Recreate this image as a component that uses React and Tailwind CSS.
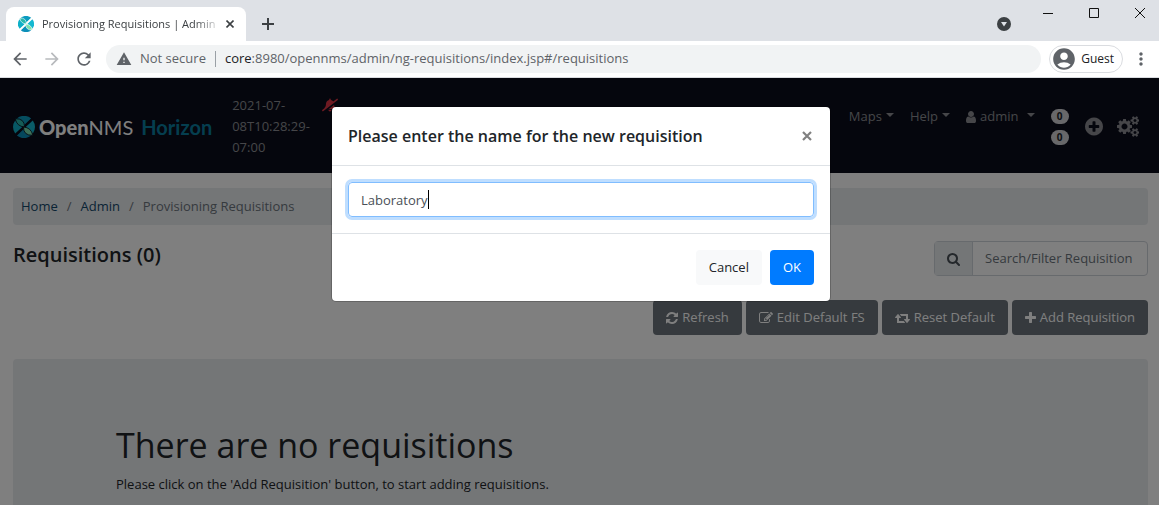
import React from "react";
import { FaBellSlash } from "react-icons/fa";
import { MdAccountCircle, MdArrowBack, MdArrowForward, MdRefresh, MdWarning, MdMoreVert } from "react-icons/md";

const GLYPHS = {
  refresh: [1536, "M1511 1056q0 5-1 7-64 268-268 434.5t-478 166.5q-146 0-282.5-55t-243.5-157l-129 129q-19 19-45 19t-45-19-19-45v-448q0-26 19-45t45-19h448q26 0 45 19t19 45-19 45l-137 137q71 66 161 102t187 36q134 0 250-65t186-179q11-17 53-117 8-23 30-23h192q13 0 22.5 9.5t9.5 22.5zm25-800v448q0 26-19 45t-45 19h-448q-26 0-45-19t-19-45 19-45l138-138q-148-137-349-137-134 0-250 65t-186 179q-11 17-53 117-8 23-30 23h-199q-13 0-22.5-9.5t-9.5-22.5v-7q65-268 270-434.5t480-166.5q146 0 284 55.5t245 156.5l130-129q19-19 45-19t45 19 19 45z"],
  edit: [1792, "M888 1184l116-116-152-152-116 116v56h96v96h56zm440-720q-16-16-33 1l-350 350q-17 17-1 33t33-1l350-350q17-17 1-33zm80 594v190q0 119-84.5 203.5t-203.5 84.5h-832q-119 0-203.5-84.5t-84.5-203.5v-832q0-119 84.5-203.5t203.5-84.5h832q63 0 117 25 15 7 18 23 3 17-9 29l-49 49q-14 14-32 8-23-6-45-6h-832q-66 0-113 47t-47 113v832q0 66 47 113t113 47h832q66 0 113-47t47-113v-126q0-13 9-22l64-64q15-15 35-7t20 29zm-96-738l288 288-672 672h-288v-288zm444 132l-92 92-288-288 92-92q28-28 68-28t68 28l152 152q28 28 28 68t-28 68z"],
  retweet: [1920, "M1280 1504q0 13-9.5 22.5t-22.5 9.5h-960q-8 0-13.5-2t-9-7-5.5-8-3-11.5-1-11.5v-600h-192q-26 0-45-19t-19-45q0-24 15-41l320-384q19-22 49-22t49 22l320 384q15 17 15 41 0 26-19 45t-45 19h-192v384h576q16 0 25 11l160 192q7 10 7 21zm640-416q0 24-15 41l-320 384q-20 23-49 23t-49-23l-320-384q-15-17-15-41 0-26 19-45t45-19h192v-384h-576q-16 0-25-12l-160-192q-7-9-7-20 0-13 9.5-22.5t22.5-9.5h960q8 0 13.5 2t9 7 5.5 8 3 11.5 1 11.5v600h192q26 0 45 19t19 45z"],
  plus: [1408, "M1408 736v192q0 40-28 68t-68 28h-416v416q0 40-28 68t-68 28h-192q-40 0-68-28t-28-68v-416h-416q-40 0-68-28t-28-68v-192q0-40 28-68t68-28h416v-416q0-40 28-68t68-28h192q40 0 68 28t28 68v416h416q40 0 68 28t28 68z"],
  search: [1664, "M1152 832q0-185-131.5-316.5t-316.5-131.5-316.5 131.5-131.5 316.5 131.5 316.5 316.5 131.5 316.5-131.5 131.5-316.5zm512 832q0 52-38 90t-90 38q-54 0-90-38l-343-342q-179 124-399 124-143 0-273.5-55.5t-225-150-150-225-55.5-273.5 55.5-273.5 150-225 225-150 273.5-55.5 273.5 55.5 225 150 150 225 55.5 273.5q0 220-124 399l343 343q37 37 37 90z"],
  plusCircle: [1536, "M1216 960v-128q0-26-19-45t-45-19h-256v-256q0-26-19-45t-45-19h-128q-26 0-45 19t-19 45v256h-256q-26 0-45 19t-19 45v128q0 26 19 45t45 19h256v256q0 26 19 45t45 19h128q26 0 45-19t19-45v-256h256q26 0 45-19t19-45zm320-64q0 209-103 385.5t-279.5 279.5-385.5 103-385.5-103-279.5-279.5-103-385.5 103-385.5 279.5-279.5 385.5-103 385.5 103 279.5 279.5 103 385.5z"],
  user: [1280, "M1280 1399q0 109-62.5 187t-150.5 78h-854q-88 0-150.5-78t-62.5-187q0-85 8.5-160.5t31.5-152 58.5-131 94-89 134.5-34.5q131 128 313 128t313-128q76 0 134.5 34.5t94 89 58.5 131 31.5 152 8.5 160.5zm-256-887q0 159-112.5 271.5t-271.5 112.5-271.5-112.5-112.5-271.5 112.5-271.5 271.5-112.5 271.5 112.5 112.5 271.5z"],
  cogs: [1920, "M896 896q0-106-75-181t-181-75-181 75-75 181 75 181 181 75 181-75 75-181zm768 512q0-52-38-90t-90-38-90 38-38 90q0 53 37.5 90.5t90.5 37.5 90.5-37.5 37.5-90.5zm0-1024q0-52-38-90t-90-38-90 38-38 90q0 53 37.5 90.5t90.5 37.5 90.5-37.5 37.5-90.5zm-384 421v185q0 10-7 19.5t-16 10.5l-155 24q-11 35-32 76 34 48 90 115 7 11 7 20 0 12-7 19-23 30-82.5 89.5t-78.5 59.5q-11 0-21-7l-115-90q-37 19-77 31-11 108-23 155-7 24-30 24h-186q-11 0-20-7.5t-10-17.5l-23-153q-34-10-75-31l-118 89q-7 7-20 7-11 0-21-8-144-133-144-160 0-9 7-19 10-14 41-53t47-61q-23-44-35-82l-152-24q-10-1-17-9.5t-7-19.5v-185q0-10 7-19.5t16-10.5l155-24q11-35 32-76-34-48-90-115-7-11-7-20 0-12 7-20 22-30 82-89t79-59q11 0 21 7l115 90q34-18 77-32 11-108 23-154 7-24 30-24h186q11 0 20 7.5t10 17.5l23 153q34 10 75 31l118-89q8-7 20-7 11 0 21 8 144 133 144 160 0 8-7 19-12 16-42 54t-45 60q23 48 34 82l152 23q10 2 17 10.5t7 19.5zm640 533v140q0 16-149 31-12 27-30 52 51 113 51 138 0 4-4 7-122 71-124 71-8 0-46-47t-52-68q-20 2-30 2t-30-2q-14 21-52 68t-46 47q-2 0-124-71-4-3-4-7 0-25 51-138-18-25-30-52-149-15-149-31v-140q0-16 149-31 13-29 30-52-51-113-51-138 0-4 4-7 4-2 35-20t59-34 30-16q8 0 46 46.5t52 67.5q20-2 30-2t30 2q51-71 92-112l6-2q4 0 124 70 4 3 4 7 0 25-51 138 17 23 30 52 149 15 149 31zm0-1024v140q0 16-149 31-12 27-30 52 51 113 51 138 0 4-4 7-122 71-124 71-8 0-46-47t-52-68q-20 2-30 2t-30-2q-14 21-52 68t-46 47q-2 0-124-71-4-3-4-7 0-25 51-138-18-25-30-52-149-15-149-31v-140q0-16 149-31 13-29 30-52-51-113-51-138 0-4 4-7 4-2 35-20t59-34 30-16q8 0 46 46.5t52 67.5q20-2 30-2t30 2q51-71 92-112l6-2q4 0 124 70 4 3 4 7 0 25-51 138 17 23 30 52 149 15 149 31z"],
};

function Glyph({ name, className }) {
  const [width, d] = GLYPHS[name];
  return (
    <svg viewBox={`0 0 ${width} 1792`} fill="currentColor" className={`w-auto shrink-0 ${className}`} aria-hidden="true">
      <path d={d} />
    </svg>
  );
}

function Mark({ className, gap }) {
  return (
    <svg viewBox="0 0 40 40" className={`shrink-0 ${className}`} aria-hidden="true">
      <path d="M7 4.5A20 20 0 0 1 33 4.500L20 17Z" fill="#0b9bbf" />
      <path d="M7 35.500A20 20 0 0 0 33 35.500L20 23Z" fill="#0b8fb8" />
      <path d="M4 8A20 20 0 0 0 4 32L17 20Z" fill="#0fb0c8" />
      <path d="M36 8A20 20 0 0 1 36 32L23 20Z" fill="#14b8d0" />
      <path d="M36 4L4 36" stroke={gap} strokeWidth="3" />
      <path d="M4 5Q21 4 21 20Q7 19 4 5Z" fill="#2ab9ad" stroke={gap} strokeWidth="1.5" />
      <path d="M36 35Q19 36 19 20Q33 21 36 35Z" fill="#7be0b0" stroke={gap} strokeWidth="1.5" />
    </svg>
  );
}

function Caret() {
  return (
    <svg viewBox="0 0 8 4" className="mb-1 h-1 w-2" fill="currentColor" aria-hidden="true">
      <path d="M0 0H8L4 4Z" />
    </svg>
  );
}

function BrowserChrome() {
  return (
    <div className="text-[#3c4043]">
      <div className="flex h-[41px] justify-between bg-[#dee1e6] pl-1.5">
        <div className="flex items-end">
          <div className="flex h-[34px] w-60 items-center rounded-t-lg bg-white pr-2 pl-3">
            <Mark className="size-4" gap="#ffffff" />
            <span className="ml-2 flex-1 text-[11px] whitespace-nowrap [mask-image:linear-gradient(to_right,black_85%,transparent)]">
              Provisioning Requisitions | Admin
            </span>
            <button aria-label="Close tab" className="p-1">
              <svg viewBox="0 0 8 8" className="size-2" stroke="#3c4043" strokeWidth="1.6"><path d="M.5.5l7 7M7.500.5l-7 7" /></svg>
            </button>
          </div>
          <button aria-label="New tab" className="mb-[11px] ml-4">
            <svg viewBox="0 0 12 12" className="size-3" stroke="#3c4043" strokeWidth="2"><path d="M6 0v12M0 6h12" /></svg>
          </button>
        </div>
        <div className="flex items-start pr-3.5">
          <button aria-label="Search tabs" className="mt-[17px] mr-8">
            <svg viewBox="0 0 14 14" className="size-3.5"><circle cx="7" cy="7" r="7" fill="#3c4043" /><path d="M4 5h6L7 9.500Z" fill="#dee1e6" /></svg>
          </button>
          <div className="mt-2 flex gap-9">
            <button aria-label="Minimize"><svg viewBox="0 0 10 10" className="size-2.5" stroke="#111" fill="none"><path d="M0 5.500h10" /></svg></button>
            <button aria-label="Maximize"><svg viewBox="0 0 10 10" className="size-2.5" stroke="#111" fill="none"><path d="M.5.5h9v9h-9z" /></svg></button>
            <button aria-label="Close"><svg viewBox="0 0 10 10" className="size-2.5" stroke="#111" fill="none"><path d="M0 0l10 10M10 0L0 10" /></svg></button>
          </div>
        </div>
      </div>
      <div className="flex h-[37px] items-center border-b border-[#dadce0] bg-white pr-2 pl-2.5 text-[#5f6368]">
        <button aria-label="Back"><MdArrowBack className="size-5" /></button>
        <button aria-label="Forward" className="ml-3"><MdArrowForward className="size-5 text-[#b8babd]" /></button>
        <button aria-label="Reload" className="ml-3"><MdRefresh className="size-5" /></button>
        <div className="ml-3 flex h-7 flex-1 items-center rounded-full bg-[#f1f3f4] pl-2.5 text-[13px]">
          <MdWarning className="size-4" />
          <span className="ml-2">Not secure</span>
          <span className="mx-[9px] h-4 w-px bg-[#9aa0a6]" />
          <span><span className="text-[#202124]">core</span>:8980/opennms/admin/ng-requisitions/index.jsp#/requisitions</span>
        </div>
        <button className="ml-2 flex h-7 items-center rounded-full border border-[#dadce0] pr-2 pl-px text-xs text-[#202124]">
          <MdAccountCircle className="size-[26px] text-[#5f6368]" />
          <span className="ml-1">Guest</span>
        </button>
        <button aria-label="Menu" className="ml-2"><MdMoreVert className="size-5" /></button>
      </div>
    </div>
  );
}

function NavBar() {
  return (
    <header className="flex h-[95px] items-start justify-between bg-[#0a0c1b] pt-[17px] pr-5 pl-[13px] text-[13px] leading-[21px] text-[#8c8c92]">
      <div className="flex">
        <a href="#home" className="mt-5 flex h-6 items-center font-['Lato',sans-serif] text-xl">
          <Mark className="mr-1 size-[22px]" gap="#0a0c1b" />
          <span className="font-black text-white">Open</span>
          <span className="text-white">NMS</span>
          <span className="ml-2 font-bold text-[#0a7d9e]">Horizon</span>
        </a>
        <div className="ml-5 w-[90px]">2021-07-<br />08T10:28:29-<br />07:00</div>
        <FaBellSlash className="mt-0.5 size-4 -scale-x-100 text-[#dc3545]" />
      </div>
      <nav className="flex">
        <a href="#maps" className="mt-[11px] flex h-[21px] items-center gap-1">Maps<Caret /></a>
        <a href="#help" className="mt-[11px] ml-4 flex h-[21px] items-center gap-1">Help<Caret /></a>
        <a href="#admin" className="mt-[11px] ml-4 flex h-[21px] items-center"><Glyph name="user" className="mr-1 h-3.5" />admin<span className="ml-2"><Caret /></span></a>
        <div className="mt-3.5 ml-4 flex w-[18px] flex-col gap-1.5 text-center text-[10px] leading-[15px] font-bold text-[#212529]">
          <span className="rounded-full bg-[#d0d1d4]">0</span>
          <span className="rounded-full bg-[#d0d1d4]">0</span>
        </div>
        <a href="#add" aria-label="Quick add" className="mt-[21px] ml-4"><Glyph name="plusCircle" className="h-[21px]" /></a>
        <a href="#configure" aria-label="Configure" className="mt-[21px] ml-3.5"><Glyph name="cogs" className="h-[21px]" /></a>
      </nav>
    </header>
  );
}

function ToolButton({ icon, children }) {
  return (
    <button className="flex h-[35px] items-center gap-1 rounded bg-[#6c757d] px-[13px] text-white">
      <Glyph name={icon} className="h-3.5" />
      {children}
    </button>
  );
}

function Page() {
  return (
    <>
      <NavBar />
      <main className="pt-[15px] pr-[11px] pl-[13px]">
        <nav className="flex h-[37px] items-center gap-[9px] rounded bg-[#e9ecef] px-2 text-[#6c757d]">
          <a href="#home" className="text-[#14486b]">Home</a>
          <span>/</span>
          <a href="#admin" className="text-[#14486b]">Admin</a>
          <span>/</span>
          <span>Provisioning Requisitions</span>
        </nav>
        <div className="mt-4 flex items-start justify-between">
          <h1 className="text-xl leading-7 font-semibold">Requisitions (0)</h1>
          <div className="flex h-[35px] w-[214px] rounded border border-[#ced4da]">
            <label htmlFor="filter" aria-label="Filter" className="flex w-[38px] items-center justify-center border-r border-[#ced4da] bg-[#e9ecef] text-[#495057]">
              <Glyph name="search" className="h-3.5" />
            </label>
            <input id="filter" type="text" placeholder="Search/Filter Requisition" className="min-w-0 flex-1 bg-transparent px-3 placeholder:text-[#6c757d]" />
          </div>
        </div>
        <div className="mt-6 flex justify-end gap-1">
          <ToolButton icon="refresh">Refresh</ToolButton>
          <ToolButton icon="edit">Edit Default FS</ToolButton>
          <ToolButton icon="retweet">Reset Default</ToolButton>
          <ToolButton icon="plus">Add Requisition</ToolButton>
        </div>
        <section className="mt-6 rounded bg-[#e9ecef] px-[103px] py-16">
          <h2 className="text-[34px] leading-[44px] font-medium">There are no requisitions</h2>
          <p className="mt-[7px] leading-5">Please click on the &#39;Add Requisition&#39; button, to start adding requisitions.</p>
        </section>
      </main>
    </>
  );
}

function RequisitionDialog() {
  return (
    <div className="absolute inset-0 flex items-start justify-center bg-black/50 pt-[29px]">
      <form role="dialog" aria-labelledby="dialog-title" className="mr-[-3px] w-[498px] rounded bg-white shadow-[0_0_0_1px_rgba(0,0,0,0.2)]" onSubmit={(e) => e.preventDefault()}>
        <div className="flex h-[59px] items-center justify-between border-b border-[#dee2e6] px-4">
          <label id="dialog-title" htmlFor="requisition" className="text-base font-semibold">Please enter the name for the new requisition</label>
          <button type="button" aria-label="Close" className="p-0.5">
            <svg viewBox="0 0 10 10" className="size-2.5" stroke="#808080" strokeWidth="2.2"><path d="M1 1l8 8M9 1l-8 8" /></svg>
          </button>
        </div>
        <div className="relative border-b border-[#dee2e6] p-4">
          <input id="requisition" type="text" defaultValue="Laboratory" className="block h-[35px] w-full rounded border border-[#80bdff] px-3 text-[#495057] shadow-[0_0_0_3px_#bfdeff] outline-none" />
          <span className="absolute top-6 left-24 h-[19px] w-px bg-black" />
        </div>
        <div className="flex justify-end gap-2 p-4">
          <button type="button" className="h-[35px] rounded bg-[#f8f9fa] px-[13px]">Cancel</button>
          <button type="submit" className="h-[35px] rounded bg-[#007bff] px-[13px] text-white">OK</button>
        </div>
      </form>
    </div>
  );
}

export default function App() {
  return (
    <div className="flex h-screen flex-col overflow-hidden bg-white font-['Open_Sans','Noto_Sans',sans-serif] text-[13px] text-[#212529]">
      <BrowserChrome />
      <div className="relative min-h-0 flex-1 overflow-hidden">
        <Page />
        <RequisitionDialog />
      </div>
    </div>
  );
}
